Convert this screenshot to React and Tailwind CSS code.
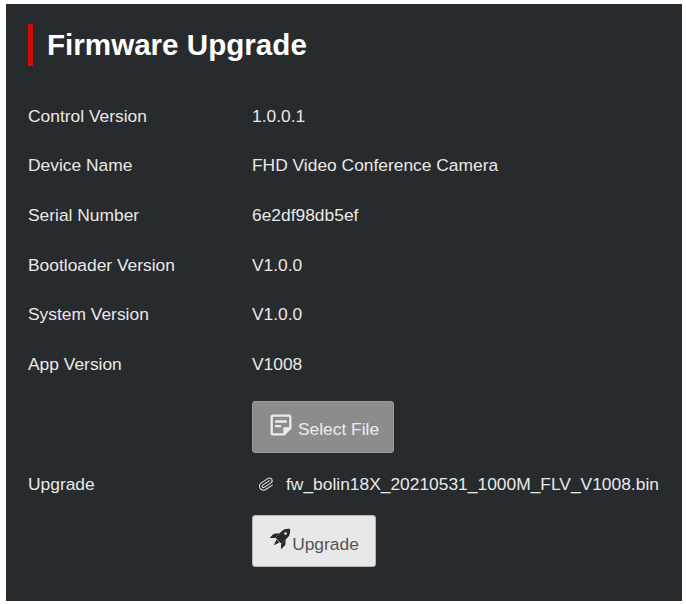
import { Paperclip } from 'lucide-react';
import { MdOutlineStickyNote2 } from 'react-icons/md';

const infoRows = [
  { label: 'Control Version', value: '1.0.0.1' },
  { label: 'Device Name', value: 'FHD Video Conference Camera' },
  { label: 'Serial Number', value: '6e2df98db5ef' },
  { label: 'Bootloader Version', value: 'V1.0.0' },
  { label: 'System Version', value: 'V1.0.0' },
  { label: 'App Version', value: 'V1008' },
];

const RocketIcon = ({ className }) => (
  <svg viewBox="0 0 24 24" className={className} fill="currentColor">
    <g transform="rotate(45 12 12)">
      <path
        fillRule="evenodd"
        d="M12 -3.5C15 -1 17 2 17 5.5V15.5H7V5.5C7 2 9 -1 12 -3.5ZM12 2.4a1.5 1.5 0 1 0 0 3a1.5 1.5 0 0 0 0-3Z"
      />
      <path d="M7 8.5V16L2.8 20.5V13.5ZM17 8.5V16L21.2 20.5V13.5Z" />
      <path d="M9.5 16H14.5L12 23Z" />
    </g>
  </svg>
);

const App = () => {
  return (
    <div className="h-[604px] w-[686px] bg-white pl-[6px] pr-[4px] pt-[4px] pb-[3px] font-['Liberation_Sans',Arial,sans-serif]">
      <div className="h-full bg-[#282b2d] pl-[22px] pt-[20px] text-[17.4px] text-[#e8e8e8]">
        <div className="flex h-[42px] items-center border-l-[5px] border-[#d10a0a] pl-[14px]">
          <h2 className="text-[29.6px] font-bold text-white">Firmware Upgrade</h2>
        </div>

        <div className="mt-[25px]">
          {infoRows.map((row) => (
            <div key={row.label} className="flex h-[49.6px] items-center">
              <div className="w-[224px]">{row.label}</div>
              <div>{row.value}</div>
            </div>
          ))}
        </div>

        <div className="mt-[12px] flex items-center">
          <div className="w-[224px]">Upgrade</div>
          <div>
            <button className="flex h-[52px] w-[142px] items-center justify-center rounded-[3px] border border-[#9a9a9a] bg-[#8c8c8c] text-[#ececec]">
              <MdOutlineStickyNote2 className="mr-[3px] h-[28px] w-[28px] -translate-y-[2px]" />
              <span className="translate-y-[2px]">Select File</span>
            </button>
            <div className="flex h-[62px] items-center whitespace-nowrap pl-[6px]">
              <Paperclip strokeWidth={1.5} className="mr-[12px] h-[16px] w-[16px] rotate-[12deg]" />
              fw_bolin18X_20210531_1000M_FLV_V1008.bin
            </div>
            <button className="flex h-[52px] w-[124px] items-center justify-center rounded-[3px] border border-[#b5b5b5] bg-[#e8e8e8] text-[#555]">
              <RocketIcon className="ml-[1px] mr-[1px] h-[21px] w-[21px] -translate-y-[2px] text-[#282b2d]" />
              <span className="translate-y-[3px]">Upgrade</span>
            </button>
          </div>
        </div>
      </div>
    </div>
  );
};

export default App;
